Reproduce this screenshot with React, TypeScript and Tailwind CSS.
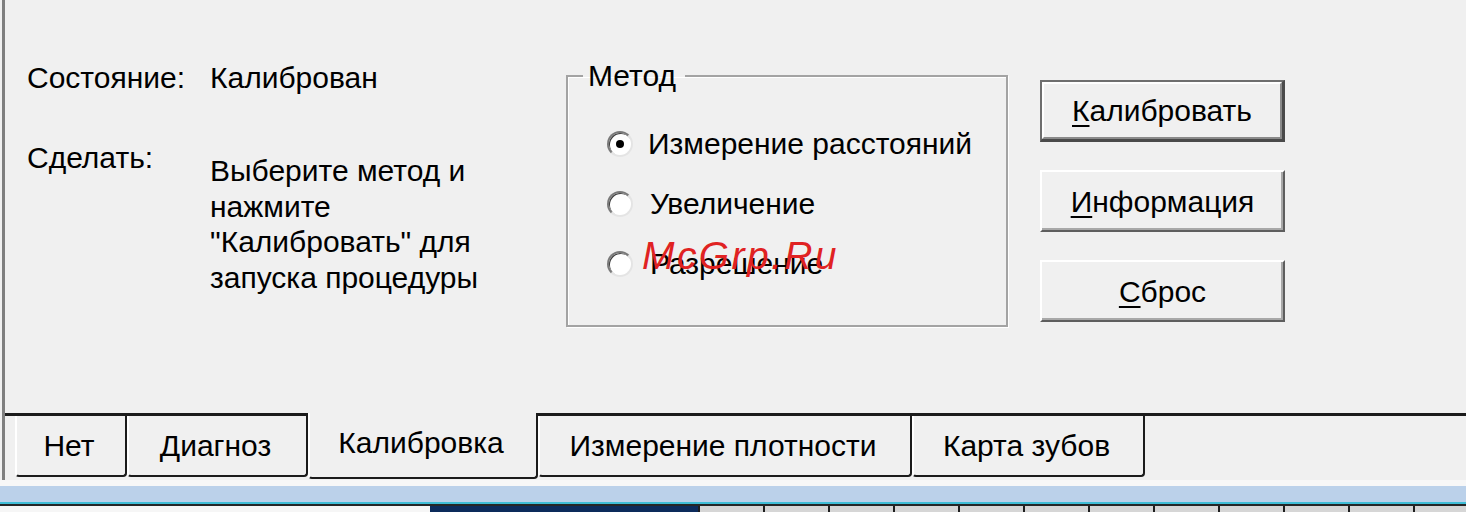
import type { ReactNode } from "react";

interface TabProps {
  label: string;
  width: string;
  active?: boolean;
}

const tabs: TabProps[] = [
  { label: "Нет", width: "w-[112px]" },
  { label: "Диагноз", width: "w-[181px]" },
  { label: "Калибровка", width: "w-[230px]", active: true },
  { label: "Измерение плотности", width: "w-[374px]" },
  { label: "Карта зубов", width: "w-[233px]" },
];

const methods = ["Измерение расстояний", "Увеличение", "Разрешение"];

function Tab({ label, width, active }: TabProps) {
  if (active) {
    return (
      <div
        className={`${width} h-[66px] shrink-0 flex items-center justify-center pb-[5px] pr-[4px] border-l-2 border-l-white border-r-2 border-r-[#1b1b1b] border-b-2 border-b-[#1b1b1b] rounded-b-[4px]`}
      >
        {label}
      </div>
    );
  }
  return (
    <div className={`${width} shrink-0 border-t-[3px] border-t-[#1b1b1b]`}>
      <div className="h-[61px] flex items-center justify-center pr-[4px] border-l-2 border-l-white border-r-2 border-r-[#1b1b1b] border-b-2 border-b-[#1b1b1b] rounded-b-[4px]">
        {label}
      </div>
    </div>
  );
}

function Radio({ checked }: { checked?: boolean }) {
  return (
    <span className="w-[26px] h-[26px] shrink-0 rounded-full bg-white border-2 border-t-[#7a7a7a] border-l-[#7a7a7a] border-r-[#e4e4e4] border-b-[#e4e4e4] shadow-[inset_1px_1px_0_#404040] flex items-center justify-center">
      {checked && <span className="w-[8px] h-[8px] rounded-full bg-black" />}
    </span>
  );
}

function WinButton({ first, rest, isDefault }: { first: string; rest: string; isDefault?: boolean }) {
  const face: ReactNode = (
    <span>
      <u className="underline underline-offset-[4px] decoration-[2px]">{first}</u>
      {rest}
    </span>
  );

  if (isDefault) {
    return (
      <div className="w-[245px] h-[62px] border-2 border-[#6e6e6e] border-r-[3px] border-b-[3px] border-r-[#4a4a4a] border-b-[#4a4a4a]">
        <div className="w-full h-full flex items-center justify-center border-2 border-t-white border-l-white border-r-[#8a8a8a] border-b-[#8a8a8a]">
          {face}
        </div>
      </div>
    );
  }

  return (
    <div className="w-[245px] h-[62px] flex items-center justify-center border-2 border-t-white border-l-white border-r-[#5e5e5e] border-b-[#5e5e5e] shadow-[inset_-2px_-2px_0_#a8a8a8]">
      {face}
    </div>
  );
}

export default function App() {
  return (
    <div className="w-[1466px] h-[512px] overflow-hidden bg-[#f0f0f0] flex flex-col font-['Liberation_Sans',Arial,sans-serif] text-[30px] leading-[35px] text-black">
      <div className="h-[480px] ml-[2px] border-l-[3px] border-l-[#7f7f7f] flex flex-col">
        {/* calibration page */}
        <div className="h-[413px] flex items-start pt-[60px] pl-[22px]">
          <div className="w-[539px] grid grid-cols-[183px_1fr]">
            <div>Состояние:</div>
            <div>Калиброван</div>
            <div className="mt-[45px]">Сделать:</div>
            <div className="mt-[58px] leading-[35.5px]">
              Выберите метод и
              <br />
              нажмите
              <br />
              "Калибровать" для
              <br />
              запуска процедуры
            </div>
          </div>

          <fieldset className="relative w-[442px] h-[269px] -mt-[2px] border-2 border-[#a3a3a3] shadow-[inset_1px_1px_0_#ffffff,1px_1px_0_#ffffff]">
            <legend className="ml-[15px] pl-[5px] pr-[9px] leading-[35px]">Метод</legend>
            <div className="mt-[33px] pl-[39px] flex flex-col gap-[25px]">
              {methods.map((m, i) => (
                <label key={m} className="flex items-center gap-[15px] h-[35px]">
                  <Radio checked={i === 0} />
                  <span className={i === 0 ? "" : "ml-[2px]"}>{m}</span>
                </label>
              ))}
            </div>
            <span className="absolute left-[74px] top-[140px] text-[39px] leading-[45px] italic tracking-[2.4px] text-[#e02222]">
              McGrp.Ru
            </span>
          </fieldset>

          <div className="ml-[32px] mt-[20px] flex flex-col gap-[28px]">
            <WinButton first="К" rest="алибровать" isDefault />
            <WinButton first="И" rest="нформация" />
            <WinButton first="С" rest="брос" />
          </div>
        </div>

        {/* tab strip */}
        <div className="h-[67px] flex items-start">
          <div className="w-[10px] shrink-0 border-t-[3px] border-t-[#1b1b1b]" />
          {tabs.map((t) => (
            <Tab key={t.label} {...t} />
          ))}
          <div className="flex-1 border-t-[3px] border-t-[#1b1b1b]" />
        </div>
      </div>

      <div className="h-[6px] bg-[#f7f7f7]" />
      <div className="h-[16px] bg-[#bbd1ea]" />
      <div className="h-[2px] bg-[#3fbdd6]" />
      <div className="h-[2px] bg-[#262626]" />
      <div className="h-[6px] flex">
        <div className="w-[430px] shrink-0 bg-[#f6f6f6]" />
        <div className="w-[268px] shrink-0 bg-[#0c2b5b]" />
        {Array.from({ length: 12 }).map((_, i) => (
          <div key={i} className="w-[65px] shrink-0 border-l-2 border-l-[#1e1e1e] bg-[#d6d6d6]" />
        ))}
      </div>
    </div>
  );
}
